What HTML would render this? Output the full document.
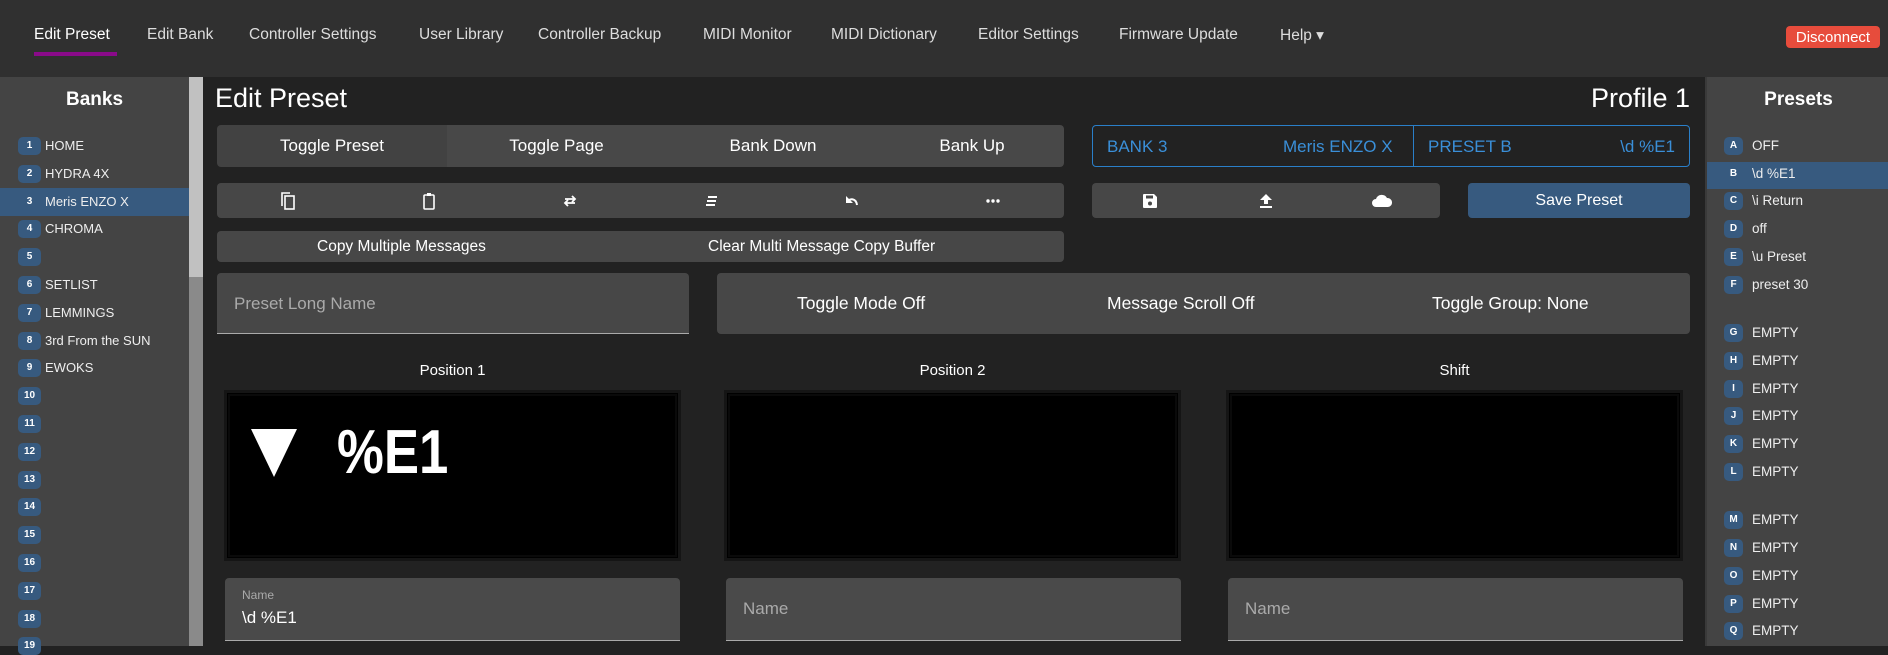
<!DOCTYPE html>
<html><head><meta charset="utf-8"><style>
*{box-sizing:border-box;margin:0;padding:0}
body{width:1888px;height:646px;overflow:hidden;background:#222;font-family:"Liberation Sans",sans-serif;color:#fff;position:relative}
.a{position:absolute}
.nav{left:0;top:0;width:1888px;height:77px;background:#303030}
.nav span{position:absolute;top:26px;font-size:15.5px;color:#ddd;white-space:nowrap}
.side{background:#444}
.badge{position:absolute;width:23px;height:18px;background:#375a7f;border-radius:5px;font-size:10px;font-weight:bold;text-align:center;line-height:18px;color:#fff}
.box{background:#474747;border-radius:4px}
.disp{background:#000;border:3px solid #151515;outline:2px solid #0a0a0a;outline-offset:-6px}
.c{display:flex;align-items:center;justify-content:center}
</style></head><body>
<div class="a nav">
<span style="left:34px;color:#fff">Edit Preset</span>
<div class="a" style="left:34px;top:52px;width:83px;height:4px;background:#8a0a8a"></div>
<span style="left:147px">Edit Bank</span>
<span style="left:249px">Controller Settings</span>
<span style="left:419px">User Library</span>
<span style="left:538px">Controller Backup</span>
<span style="left:703px">MIDI Monitor</span>
<span style="left:831px">MIDI Dictionary</span>
<span style="left:978px">Editor Settings</span>
<span style="left:1119px">Firmware Update</span>
<span style="left:1280px">Help ▾</span>
<div class="a c" style="left:1786px;top:26px;width:94px;height:22px;background:#e74c3c;border-radius:4px;font-size:15px">Disconnect</div>
</div>

<div class="a side" style="left:0;top:77px;width:189px;height:569px">
<div class="a" style="left:0;top:12px;width:189px;text-align:center;font-weight:bold;font-size:19px">Banks</div>
</div>
<div class="a" style="left:189px;top:77px;width:14px;height:200px;background:#c1c1c1"></div>
<div class="a" style="left:189px;top:277px;width:14px;height:369px;background:#8a8a8a"></div>
<div class="a" style="left:0;top:188px;width:189px;height:28px;background:#375a7f"></div>
<div id="banks"></div>

<div class="a side" style="left:1705px;top:77px;width:183px;height:569px;border-left:2px solid #3a3a3a">
<div class="a" style="left:0;top:12px;width:183px;text-align:center;font-weight:bold;font-size:19px">Presets</div>
</div>
<div class="a" style="left:1707px;top:162px;width:181px;height:27px;background:#375a7f"></div>
<div id="presets"></div>

<div class="a" style="left:215px;top:83px;font-size:27px">Edit Preset</div>
<div class="a" style="left:1490px;width:200px;text-align:right;top:83px;font-size:27px">Profile 1</div>

<div class="a" style="left:217px;top:125px;width:847px;height:42px;display:flex;border-radius:4px;overflow:hidden;font-size:17px">
<div class="c" style="width:230px;background:#424242">Toggle Preset</div>
<div class="c" style="width:219px;background:#484848">Toggle Page</div>
<div class="c" style="width:214px;background:#484848">Bank Down</div>
<div class="c" style="flex:1;background:#484848">Bank Up</div>
</div>
<div class="a" style="left:1092px;top:125px;width:598px;height:42px;border:1px solid #2a7fc9;border-radius:4px;color:#3a8fd8;font-size:17px">
<span class="a" style="left:14px;top:11px">BANK 3</span>
<span class="a" style="left:190px;top:11px">Meris ENZO X</span>
<div class="a" style="left:320px;top:0;width:1px;height:40px;background:#2a7fc9"></div>
<span class="a" style="left:335px;top:11px">PRESET B</span>
<span class="a" style="right:14px;top:11px">\d %E1</span>
</div>

<div class="a box" style="left:217px;top:183px;width:847px;height:35px;display:flex">
<div class="c" style="flex:1"><svg width="14" height="18" viewBox="0 0 14 18"><path d="M1 14V1h8" stroke="#fff" stroke-width="1.6" fill="none"/><rect x="4" y="4" width="9" height="13" stroke="#fff" stroke-width="1.6" fill="none"/></svg></div>
<div class="c" style="flex:1"><svg width="12" height="18" viewBox="0 0 12 18"><rect x="1" y="3" width="10" height="14" rx="1" stroke="#fff" stroke-width="1.6" fill="none"/><rect x="4" y="1" width="4" height="3" fill="#fff"/></svg></div>
<div class="c" style="flex:1"><svg width="14" height="12" viewBox="0 0 14 12"><path d="M2 4h9M9 1l3 3-3 3M12 8H3M5 5 2 8l3 3" stroke="#fff" stroke-width="1.8" fill="none"/></svg></div>
<div class="c" style="flex:1"><svg width="14" height="12" viewBox="0 0 14 12"><path d="M4 2h9M3 6h9M2 10h9" stroke="#fff" stroke-width="2"/></svg></div>
<div class="c" style="flex:1"><svg width="14" height="12" viewBox="0 0 14 12"><path d="M2 7c3-4 9-4 10 3" stroke="#fff" stroke-width="2" fill="none"/><path d="M1 1l0 7 7 0z" fill="#fff"/></svg></div>
<div class="c" style="flex:1"><svg width="14" height="4" viewBox="0 0 14 4"><circle cx="2" cy="2" r="1.7" fill="#fff"/><circle cx="7" cy="2" r="1.7" fill="#fff"/><circle cx="12" cy="2" r="1.7" fill="#fff"/></svg></div>
</div>
<div class="a box" style="left:1092px;top:183px;width:348px;height:35px;display:flex">
<div class="c" style="flex:1"><svg width="14" height="14" viewBox="0 0 14 14"><path d="M0 1q0-1 1-1h10l3 3v10q0 1-1 1H1q-1 0-1-1z" fill="#fff"/><rect x="3" y="1.5" width="7" height="3" fill="#474747"/><circle cx="7" cy="9.5" r="2" fill="#474747"/></svg></div>
<div class="c" style="flex:1"><svg width="14" height="14" viewBox="0 0 14 14"><path d="M7 0l6 6H9v4H5V6H1z" fill="#fff"/><rect x="1" y="12" width="12" height="2" fill="#fff"/></svg></div>
<div class="c" style="flex:1"><svg width="20" height="13" viewBox="0 0 20 13"><path d="M4 13a4 4 0 0 1 0-8 6 6 0 0 1 11-1 4.5 4.5 0 0 1 1 9z" fill="#fff"/></svg></div>
</div>
<div class="a c" style="left:1468px;top:183px;width:222px;height:35px;background:#375a7f;border-radius:4px;font-size:16px">Save Preset</div>

<div class="a box" style="left:217px;top:231px;width:847px;height:31px;font-size:15.5px">
<span class="a" style="left:100px;top:7px">Copy Multiple Messages</span>
<span class="a" style="left:491px;top:7px">Clear Multi Message Copy Buffer</span>
</div>

<div class="a" style="left:217px;top:273px;width:472px;height:61px;background:#474747;border-radius:4px 4px 0 0;border-bottom:1px solid #aaa">
<span class="a" style="left:17px;top:21px;font-size:17px;color:#aaa">Preset Long Name</span>
</div>
<div class="a" style="left:717px;top:273px;width:973px;height:61px;background:#474747;border-radius:4px;font-size:17.5px">
<span class="a" style="left:80px;top:20px">Toggle Mode Off</span>
<span class="a" style="left:390px;top:20px">Message Scroll Off</span>
<span class="a" style="left:715px;top:20px">Toggle Group: None</span>
</div>

<div class="a" style="left:224px;top:362px;width:457px;text-align:center;font-size:15px">Position 1</div>
<div class="a" style="left:724px;top:362px;width:457px;text-align:center;font-size:15px">Position 2</div>
<div class="a" style="left:1226px;top:362px;width:457px;text-align:center;font-size:15px">Shift</div>

<div class="a disp" style="left:224px;top:390px;width:457px;height:171px">
<svg class="a" style="left:24px;top:36px" width="46" height="48" viewBox="0 0 46 48"><path d="M0 0h46L23 48z" fill="#fff"/></svg>
<span class="a" style="left:110px;top:24px;font-size:62px;font-weight:bold;transform:scaleX(0.85);transform-origin:left top">%E1</span>
</div>
<div class="a disp" style="left:724px;top:390px;width:457px;height:171px"></div>
<div class="a disp" style="left:1226px;top:390px;width:457px;height:171px"></div>

<div class="a" style="left:225px;top:578px;width:455px;height:63px;background:#4a4a4a;border-radius:4px 4px 0 0;border-bottom:1px solid #aaa">
<span class="a" style="left:17px;top:10px;font-size:12px;color:#aaa">Name</span>
<span class="a" style="left:17px;top:30px;font-size:17px">\d %E1</span>
</div>
<div class="a" style="left:726px;top:578px;width:455px;height:63px;background:#4a4a4a;border-radius:4px 4px 0 0;border-bottom:1px solid #aaa">
<span class="a" style="left:17px;top:21px;font-size:17px;color:#aaa">Name</span>
</div>
<div class="a" style="left:1228px;top:578px;width:455px;height:63px;background:#4a4a4a;border-radius:4px 4px 0 0;border-bottom:1px solid #aaa">
<span class="a" style="left:17px;top:21px;font-size:17px;color:#aaa">Name</span>
</div>

<script>
var b=["HOME","HYDRA 4X","Meris ENZO X","CHROMA","","SETLIST","LEMMINGS","3rd From the SUN","EWOKS","","","","","","","","","",""];
var h="";
for(var i=0;i<b.length;i++){var y=133+i*27.8;
h+='<div class="badge" style="left:18px;top:'+(y+4)+'px;'+(i==2?'background:none':'')+'">'+(i+1)+'</div>';
h+='<div class="a" style="left:45px;top:'+(y+5)+'px;font-size:13px;color:#eee">'+b[i]+'</div>';}
document.getElementById("banks").innerHTML=h;
var p=[["A","OFF"],["B","\\d %E1"],["C","\\i Return"],["D","off"],["E","\\u Preset"],["F","preset 30"]];
for(var i=6;i<17;i++)p.push([String.fromCharCode(65+i),"EMPTY"]);
h="";
for(var i=0;i<p.length;i++){var y=133+i*27.7+(i>=6?21:0)+(i>=12?21:0);
h+='<div class="badge" style="left:1724px;top:'+(y+4)+'px;width:19px;'+(i==1?'background:none':'')+'">'+p[i][0]+'</div>';
h+='<div class="a" style="left:1752px;top:'+(y+5)+'px;font-size:13.5px;color:#eee">'+p[i][1]+'</div>';}
document.getElementById("presets").innerHTML=h;
</script>
</body></html>
